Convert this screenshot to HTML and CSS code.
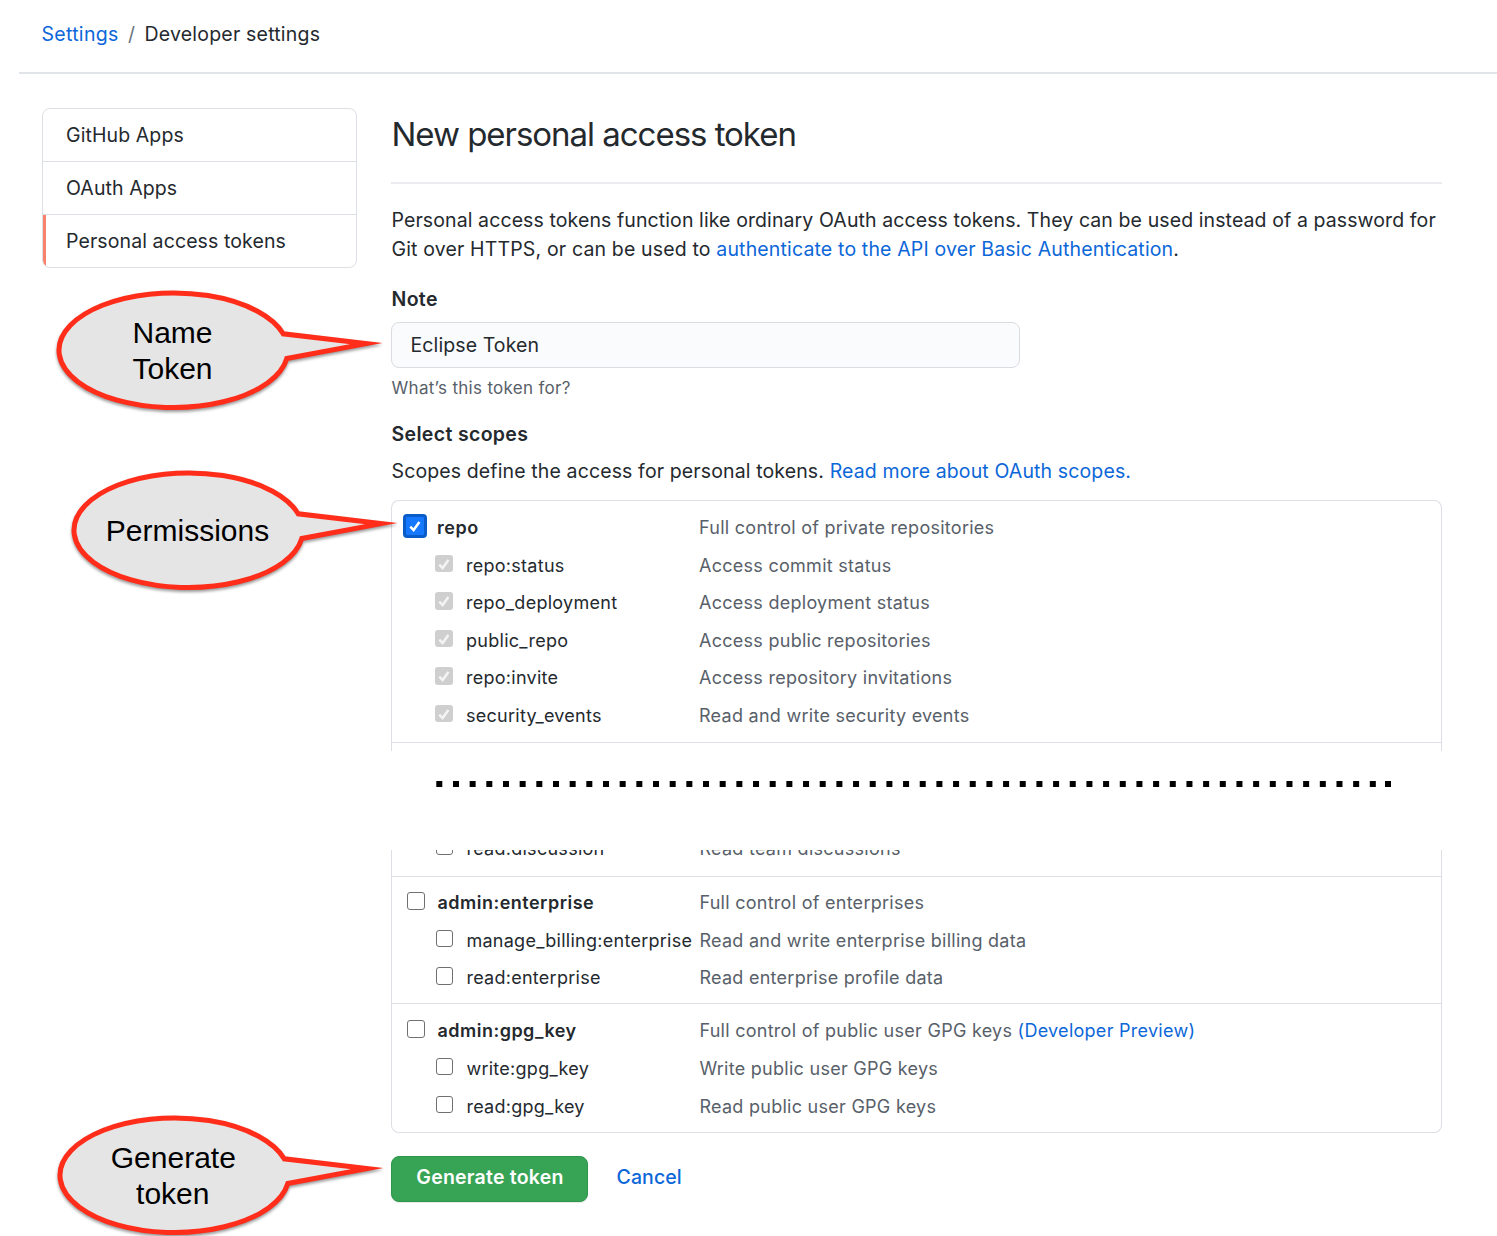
FILE: index.html
```html
<!DOCTYPE html>
<html lang="en">
<head>
<meta charset="utf-8">
<title>New personal access token</title>
<link rel="stylesheet" href="styles.css">
</head>
<body>
<svg class="defs" aria-hidden="true">
  <symbol id="tick" viewBox="0 0 18 18"><path d="M4.3 9.6 7.6 13 13.4 5" fill="none" stroke="currentColor" stroke-width="2.5"/></symbol>
  <symbol id="bubble" viewBox="0 0 340 136"><path d="M234.2 48.8A114.5 57.3 0 1 0 237.8 73.5L317 58.6Z" fill="#e5e5e5" stroke="#ff2d1a" stroke-width="5" stroke-miterlimit="20"/></symbol>
</svg>

<nav class="crumbs"><a>Settings</a><span class="sep">/</span><span class="current">Developer settings</span></nav>

<div class="layout">
  <aside class="menu">
    <a class="menu-item">GitHub Apps</a>
    <a class="menu-item">OAuth Apps</a>
    <a class="menu-item selected">Personal access tokens</a>
  </aside>
  <main class="content">
    <h1>New personal access token</h1>
    <p class="intro"><span>Personal access tokens function like ordinary OAuth access tokens. They can be used instead of a password for</span><br><span class="wide">Git over HTTPS, or can be used to <a>authenticate to the API over Basic Authentication</a>.</span></p>
    <div class="label">Note</div>
    <div class="field">Eclipse Token</div>
    <div class="hint">What’s this token for?</div>
    <div class="label">Select scopes</div>
    <p class="scopes-text">Scopes define the access for personal tokens. <a>Read more about OAuth scopes.</a></p>

    <section class="scopes scopes-top">
      <div class="group">
        <div class="row parent"><i class="box focus"><svg><use href="#tick"/></svg></i><b>repo</b><span>Full control of private repositories</span></div>
        <div class="row"><i class="box off"><svg><use href="#tick"/></svg></i><em>repo:status</em><span>Access commit status</span></div>
        <div class="row"><i class="box off"><svg><use href="#tick"/></svg></i><em>repo_deployment</em><span>Access deployment status</span></div>
        <div class="row"><i class="box off"><svg><use href="#tick"/></svg></i><em>public_repo</em><span>Access public repositories</span></div>
        <div class="row"><i class="box off"><svg><use href="#tick"/></svg></i><em>repo:invite</em><span>Access repository invitations</span></div>
        <div class="row"><i class="box off"><svg><use href="#tick"/></svg></i><em>security_events</em><span>Read and write security events</span></div>
      </div>
    </section>

    <svg class="dots" viewBox="0 0 956 6"><path d="M.3 3H940M949 3h6" stroke="#000" stroke-width="6" stroke-dasharray="6 10.67"/></svg>

    <section class="scopes scopes-bottom">
      <div class="group cut">
        <div class="row"><i class="box"></i><em>read:discussion</em><span>Read team discussions</span></div>
      </div>
      <div class="group enterprise">
        <div class="row parent"><i class="box"></i><b>admin:enterprise</b><span>Full control of enterprises</span></div>
        <div class="row"><i class="box"></i><em>manage_billing:enterprise</em><span>Read and write enterprise billing data</span></div>
        <div class="row"><i class="box"></i><em>read:enterprise</em><span>Read enterprise profile data</span></div>
      </div>
      <div class="group">
        <div class="row parent"><i class="box"></i><b>admin:gpg_key</b><span>Full control of public user GPG keys <a>(Developer Preview)</a></span></div>
        <div class="row"><i class="box"></i><em>write:gpg_key</em><span>Write public user GPG keys</span></div>
        <div class="row"><i class="box"></i><em>read:gpg_key</em><span>Read public user GPG keys</span></div>
      </div>
    </section>

    <div class="actions"><button class="primary">Generate token</button><a class="cancel">Cancel</a></div>
  </main>
</div>

<svg class="callout name-token" viewBox="0 0 340 136"><use href="#bubble" class="shape"/><text x="123.5" y="58">Name</text><text x="123.5" y="94">Token</text></svg>
<svg class="callout permissions" viewBox="0 0 340 136"><use href="#bubble" class="shape"/><text x="123.5" y="75.5">Permissions</text></svg>
<svg class="callout generate" viewBox="0 0 340 136"><use href="#bubble" class="shape"/><text x="123.3" y="58">Generate</text><text x="122.8" y="94">token</text></svg>
</body>
</html>
```
FILE: styles.css
```css
* { box-sizing: border-box; }
body { margin: 0; width: 1497px; height: 1236px; overflow: hidden; position: relative; background: #fff; color: #24292e; font: 19.5px/28.5px Inter, "Liberation Sans", sans-serif; letter-spacing: .1px; }
a { color: #0c67d9; }
p, h1 { margin: 0; }
span, b, em, p { white-space: nowrap; }
.defs { display: block; width: 0; height: 0; }
.crumbs { margin-left: 19px; padding: 19.5px 0 0 22.5px; height: 74px; border-bottom: 2px solid #e1e4e8; display: flex; letter-spacing: .3px; }
.current { letter-spacing: .2px; }
.sep { width: 26px; text-align: center; color: #6a737d; }
.layout { display: flex; gap: 34px; padding: 34px 55px 0 42px; }
.menu { width: 315px; height: 160px; border: 1px solid #dcdfe4; border-radius: 8px; overflow: hidden; flex: none; }
.menu-item { display: flex; align-items: center; height: 53px; padding: 1px 0 0 23px; border-bottom: 1px solid #dcdfe4; color: #24292e; }
.menu-item.selected { border-left: 3px solid #f9826c; border-bottom: 0; padding: 0 0 1px 20px; }
.content { flex: 1; min-width: 0; }
h1 { height: 76px; padding: 4px 0 0 .5px; border-bottom: 2px solid #eaecef; font-size: 33px; line-height: 44px; font-weight: 400; letter-spacing: -1.03px; }
.intro { padding: 22px 0 0 .5px; height: 101px; }
.wide { letter-spacing: .155px; }
.label { font-weight: 600; height: 37px; padding-left: .5px; letter-spacing: .34px; }
.field { width: 629px; height: 46px; border: 1px solid #d9dce0; border-radius: 8px; background: #fafbfc; padding: 8px 18.5px; }
.hint { font-size: 17px; letter-spacing: .3px; color: #586069; padding: 5.5px 0 0 .5px; height: 52px; }
.scopes-text { height: 43px; padding-left: .5px; letter-spacing: .125px; }
.scopes { width: 1051px; border: 1px solid #dcdfe4; overflow: hidden; }
.scopes-top { height: 251px; border-bottom: 0; border-radius: 8px 8px 0 0; }
.scopes-bottom { height: 283px; border-top: 0; border-radius: 0 0 8px 8px; }
.group { padding: 8px 0 7px; border-bottom: 1px solid #dcdfe4; font-size: 18px; letter-spacing: .27px; }
.scopes-top .group { padding: 8.4px 0 6.6px; }
.scopes-bottom .group:last-child { border-bottom: 0; padding-top: 8.4px; }
.scopes-bottom .group.cut { margin-top: -28px; padding-bottom: 8px; }
.enterprise { padding-bottom: 6px; }
.row { display: grid; grid-template-columns: 74px 233px 1fr; align-items: center; height: 37.6px; }
.parent { grid-template-columns: 45px 262px 1fr; }
.row span { color: #586069; }
.row em { font-style: normal; }
.row b { font-weight: 600; letter-spacing: .5px; }
.scopes-bottom em, .scopes-bottom b, .scopes-bottom span { padding-left: .4px; }
.box { width: 17.5px; height: 17.5px; border: 1.5px solid #707070; border-radius: 3px; margin: -5px 0 0 43.5px; display: block; }
.parent .box { margin-left: 15px; }
.box svg { display: block; width: 18px; height: 18px; }
.box.off { background: #cfcfcf; border: 0; color: #f4f4f4; margin-left: 42.5px; width: 18px; }
.parent .box.focus { width: 24px; height: 24px; margin: -4px 0 0 11px; border: 3px solid #0a5cc8; border-radius: 4px; background: #1677ff; color: #fff; }
.dots { display: block; width: 956px; height: 6px; margin: 30px 0 63px 45px; }
.actions { display: flex; margin-top: 23px; font-weight: 500; }
.primary { width: 197px; height: 46px; border: 1px solid #2c974b; border-radius: 8px; background: #37a355; color: #fff; font: inherit; font-weight: 600; letter-spacing: .22px; padding: 0 0 3px 1px; box-shadow: 0 1px 1px rgba(27,31,35,.1); }
.cancel { margin: 7px 0 0 28.5px; }
.callout { position: absolute; width: 340px; height: 136px; overflow: hidden; letter-spacing: 0; }
.callout .shape { filter: drop-shadow(0 2px 1.5px rgba(0,0,0,.4)); }
.callout text { font: 30px "Liberation Sans", Arial, sans-serif; text-anchor: middle; fill: #000; }
.name-token { left: 49px; top: 285px; }
.permissions { left: 64px; top: 465px; }
.generate { left: 50px; top: 1110px; }
```
